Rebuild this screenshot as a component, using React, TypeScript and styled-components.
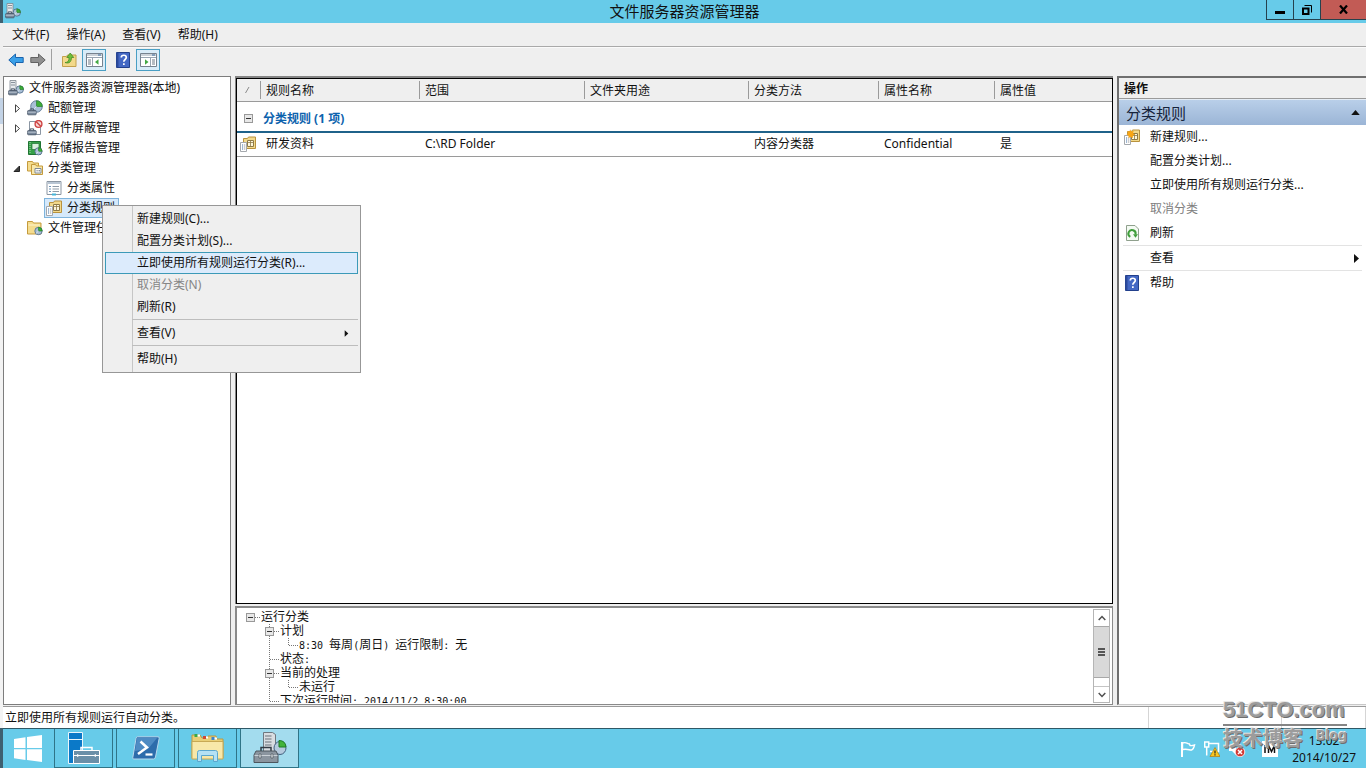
import React from "react";
import styled, { createGlobalStyle, css } from "styled-components";

const GlobalStyle = createGlobalStyle`
  *, *::before, *::after { box-sizing: border-box; }
  body {
    margin: 0;
    background: #efefef;
    color: #111;
    font-family: "Noto Sans", "Noto Sans CJK SC", sans-serif;
    font-size: 12px;
    line-height: 20px;
  }
  button {
    font: inherit;
    color: inherit;
    border: 0;
    padding: 0;
    background: none;
    text-align: left;
    white-space: nowrap;
  }
  ul { list-style: none; margin: 0; padding: 0; }
  h1, h2, h3 { margin: 0; font-weight: 400; }
  svg { display: block; flex: none; }
`;

/* ---------- frame ---------- */

const Desktop = styled.div`
  position: relative;
  min-height: 100vh;
  display: grid;
  grid-template-columns: minmax(0, 1fr);
  grid-template-rows: auto auto auto 1fr auto auto;
  padding-left: 3px;
  background: linear-gradient(
    #3e6070 0 23px,
    #efefef 23px 98px,
    #c3d3e6 98px 124px,
    #f3f3f3 124px calc(100% - 40px),
    #3e6070 calc(100% - 40px)
  );
`;

const TitleBar = styled.header`
  display: grid;
  grid-template-columns: 1fr auto 1fr;
  height: 23px;
  background: #67cbe9;
`;

const TitleIcon = styled.div`
  padding: 3px 2px;
`;

const Title = styled.h1`
  font-size: 15px;
  line-height: 23px;
`;

const Caption = styled.div`
  display: flex;
  justify-content: flex-end;
  align-items: flex-start;
`;

const CaptionButton = styled.button<{ $wide?: boolean }>`
  display: flex;
  align-items: center;
  justify-content: center;
  width: ${(p) => (p.$wide ? 46 : 27)}px;
  height: 20px;
  border: 1px solid #25424e;
  border-top: 0;
  border-right: 0;
  background: ${(p) => (p.$wide ? "#c25b55" : "#67cbe9")};
`;

const MenuBar = styled.nav`
  display: flex;
  height: 24px;
  padding-left: 1px;
  background: #efefef;
  border-bottom: 1px solid #a9a9a9;
`;

const MenuBarButton = styled.button`
  padding: 0 9px 0 8px;
  line-height: 23px;
`;

const ToolBar = styled.div`
  display: flex;
  align-items: flex-start;
  gap: 8px;
  height: 29px;
  padding: 1px 4px;
  background: #efefef;
  border-top: 1px solid #fafafa;
`;

const ToolGroup = styled.div`
  display: flex;
  gap: 4px;
`;

const ToolButton = styled.button<{ $on?: boolean }>`
  display: flex;
  align-items: center;
  justify-content: center;
  width: ${(p) => (p.$on ? 24 : 18)}px;
  height: 22px;
  ${(p) =>
    p.$on &&
    css`
      background: #d9ecf8;
      border: 1px solid #4a9fc4;
    `}
`;

const ToolDivider = styled.span`
  width: 1px;
  height: 21px;
  background: #a0a0a0;
`;

const Main = styled.main`
  display: grid;
  grid-template-columns: 228px minmax(0, 1fr) 249px;
  column-gap: 4px;
  min-height: 0;
  padding-bottom: 1px;
  background: #efefef;
`;

/* ---------- console tree ---------- */

const TreePane = styled.aside`
  padding-top: 1px;
  background: #fff;
  border: 1px solid #7d7d7d;
`;

const TreeRow = styled.div<{ $depth: number }>`
  position: relative;
  display: flex;
  align-items: center;
  height: 20px;
  padding-left: ${(p) => [3, 9, 41][p.$depth]}px;
`;

const Expander = styled.button`
  width: 13px;
  height: 20px;
  display: flex;
  align-items: center;
`;

const TreeLabel = styled.button<{ $selected?: boolean }>`
  display: flex;
  align-items: center;
  gap: 5px;
  height: 20px;
  padding: 0 3px 0 1px;
  border: 1px solid transparent;
  margin-left: -1px;
  ${(p) =>
    p.$selected &&
    css`
      border-color: #7fb4dc;
      background: #d6e9fb;
    `}
`;

const ContextMenu = styled.div`
  position: absolute;
  z-index: 2;
  left: 98px;
  top: 7px;
  width: 259px;
  padding: 2px;
  background: linear-gradient(90deg, #efefef 29px, #c6c6c6 29px 30px, #efefef 30px);
  border: 1px solid #979797;
`;

const ContextItem = styled.button<{ $hot?: boolean }>`
  display: flex;
  align-items: center;
  justify-content: space-between;
  width: 100%;
  height: 22px;
  padding: 0 8px 0 31px;
  border: 1px solid ${(p) => (p.$hot ? "#3c9ab8" : "transparent")};
  background: ${(p) => (p.$hot ? "#dcebfc" : "transparent")};
  &:disabled { color: #868686; }
`;

const ContextDivider = styled.hr`
  margin: 1px 0 2px 27px;
  border: 0;
  border-top: 1px solid #bdbdbd;
`;

/* ---------- result list ---------- */

const Center = styled.section`
  display: grid;
  grid-template-rows: 1fr 99px;
  row-gap: 2px;
  min-width: 0;
`;

const ListPane = styled.div`
  display: grid;
  border: solid #858585;
  border-width: 2px 0 0 1px;
`;

const ListBody = styled.div`
  background: #fff;
  border: 1px solid #000;
`;

const RuleTable = styled.table`
  width: 100%;
  table-layout: fixed;
  border-collapse: collapse;
`;

const HeadCell = styled.th`
  height: 22px;
  padding: 1px 0 0;
  font-weight: 400;
  text-align: left;
  background: #efefef;
  border-bottom: 1px solid #9a9a9a;
`;

const HeadText = styled.span<{ $first?: boolean }>`
  display: block;
  height: 18px;
  line-height: 20px;
  padding-left: ${(p) => (p.$first ? 6 : 5)}px;
  border-left: ${(p) => (p.$first ? "0" : "1px solid #9a9a9a")};
`;

const GroupCell = styled.td`
  height: 31px;
  padding: 5px 0 0 7px;
  border-bottom: 2px solid #1f628a;
`;

const GroupLabel = styled.div`
  display: flex;
  align-items: center;
  gap: 10px;
  color: #0c62ad;
  font-weight: 700;
`;

const Cell = styled.td`
  height: 24px;
  padding: 0 0 0 6px;
  border-bottom: 1px solid #9a9a9a;
  &:first-child { padding-left: 3px; }
`;

const Box = styled.button`
  width: 9px;
  height: 9px;
  border: 1px solid #999;
  background: linear-gradient(#333, #333) center / 5px 1px no-repeat #e8e8e8;
`;

/* ---------- status tree under the list ---------- */

const StatusPane = styled.div`
  display: flex;
  min-height: 0;
  overflow: hidden;
  padding: 1px 2px 1px 4px;
  background: #fff;
  border: 2px solid #8a8a8a;
  border-right-width: 1px;
  border-bottom-width: 1px;
`;

const StatusTree = styled.ul`
  flex: 1;
  padding-top: 1px;
  overflow: hidden;
`;

const StatusRow = styled.li`
  display: flex;
  height: 14px;
  line-height: 14px;
  white-space: pre;
`;

const dotsV = "repeating-linear-gradient(#777 0 1px, transparent 1px 2px)";
const dotsH = "repeating-linear-gradient(90deg, #777 0 1px, transparent 1px 2px)";

const guides = {
  none: "none",
  root: `${dotsH} 10px 7px / 9px 1px no-repeat`,
  through: `${dotsV} 9px 0 / 1px 100% no-repeat`,
  branch: `${dotsV} 9px 0 / 1px 100% no-repeat, ${dotsH} 10px 7px / 9px 1px no-repeat`,
  elbow: `${dotsV} 9px 0 / 1px 8px no-repeat, ${dotsH} 10px 7px / 9px 1px no-repeat`,
};

type Guide = keyof typeof guides;

const GuideCell = styled.span<{ $kind: Guide }>`
  display: flex;
  align-items: center;
  justify-content: center;
  width: 19px;
  background: ${(p) => guides[p.$kind]};
`;

const StatusText = styled.span`
  padding-left: 1px;
`;

const Fixed = styled.span`
  font-family: "DejaVu Sans Mono", monospace;
  font-size: 10px;
`;

const ScrollBar = styled.div`
  display: flex;
  flex-direction: column;
  width: 17px;
  border: 1px solid #b5b5b5;
`;

const ScrollArrow = styled.button<{ $down?: boolean }>`
  display: flex;
  align-items: center;
  justify-content: center;
  height: 16px;
  border-top: ${(p) => (p.$down ? "1px solid #c4c4c4" : "0")};
`;

const ScrollThumb = styled.button`
  display: flex;
  align-items: center;
  justify-content: center;
  flex: 1;
  margin-bottom: 8px;
  background: #d9d9d9;
  border: solid #a8a8a8;
  border-width: 1px 0;
`;

/* ---------- action pane ---------- */

const ActionPane = styled.aside`
  background: #fff;
  border: 2px solid #6f6f6f;
  border-right: 0;
  border-bottom: 1px solid #c8c8c8;
`;

const ActionTitle = styled.h2`
  height: 21px;
  padding-left: 5px;
  font-size: 12px;
  font-weight: 700;
  line-height: 21px;
  background: #efefef;
  border-bottom: 1px solid #9a9a9a;
`;

const ActionGroup = styled.h3`
  display: flex;
  align-items: center;
  justify-content: space-between;
  height: 26px;
  padding: 0 6px 0 7px;
  font-size: 15px;
  color: #16233a;
  background: linear-gradient(#b9cfe9, #9bb5d6);
  border-top: 1px solid #e4ecf5;
`;

const ActionItem = styled.button`
  display: flex;
  align-items: center;
  width: 100%;
  height: 24px;
  padding: 0 6px 0 5px;
  &:disabled { color: #808080; }
`;

const ActionIcon = styled.span`
  display: flex;
  justify-content: center;
  width: 16px;
  margin-right: 10px;
`;

const ActionText = styled.span`
  flex: 1;
`;

const ActionDivider = styled.hr`
  margin: 0 4px;
  border: 0;
  border-top: 1px solid #e3e3e3;
`;

/* ---------- status bar and task bar ---------- */

const StatusBar = styled.footer`
  display: flex;
  height: 22px;
  padding-left: 2px;
  line-height: 21px;
  background: #fff;
  border-top: 1px solid #9a9a9a;
`;

const StatusMessage = styled.span`
  flex: 1;
  border-right: 1px solid #d5d5d5;
`;

const StatusSlot = styled.span<{ $w: number }>`
  width: ${(p) => p.$w}px;
  border-right: 1px solid #d5d5d5;
`;

const TaskBar = styled.footer`
  display: flex;
  gap: 3px;
  height: 40px;
  background: #67cbe9;
  border-top: 1px solid #2f5866;
`;

const TaskButton = styled.button<{ $start?: boolean; $active?: boolean }>`
  display: flex;
  align-items: center;
  justify-content: center;
  width: ${(p) => (p.$start ? 50 : 59)}px;
  margin-right: ${(p) => (p.$start ? -2 : 0)}px;
  border: ${(p) => (p.$start ? "0" : "1px solid #2f7487")};
  border-top-width: 0;
  background: ${(p) => (p.$active ? "#a3dcee" : "transparent")};
`;

const Tray = styled.div`
  display: flex;
  align-items: center;
  gap: 8px;
  margin-left: auto;
  padding-right: 10px;
`;

const InputMethod = styled.span`
  margin-left: 8px;
`;

const Clock = styled.time`
  margin-left: 6px;
  text-align: center;
  line-height: 17px;
`;

const Watermark = styled.div`
  position: absolute;
  z-index: 3;
  right: 19px;
  bottom: 16px;
  width: 124px;
  color: #9c9c9c;
  font-weight: 700;
  text-shadow: -1px -1px 0 #e6e6e6, 1px 1px 0 #6e6e6e;
  pointer-events: none;
`;

const WatermarkSite = styled.div`
  font-family: "Liberation Sans", sans-serif;
  font-size: 22px;
  line-height: 28px;
  border-bottom: 2px solid #858585;
`;

const WatermarkBlog = styled.div`
  display: flex;
  justify-content: space-between;
  font-size: 20px;
  line-height: 26px;
`;

const WatermarkSmall = styled.span`
  font-size: 14px;
  line-height: 18px;
`;

/* ---------- icons ---------- */

const Pie = ({ x, y, r }: { x: number; y: number; r: number }) => (
  <g>
    <circle cx={x} cy={y} r={r} fill="#a9bfd6" stroke="#4b6785" strokeWidth="0.8" />
    <path d={`M${x} ${y}V${y - r}A${r} ${r} 0 0 1 ${x + r} ${y}Z`} fill="#3fae38" stroke="#1f7a24" strokeWidth="0.6" />
    <path d={`M${x} ${y}L${x - r * 0.7} ${y + r * 0.7}`} stroke="#e8f0f8" strokeWidth="0.8" />
  </g>
);

const Toolbox = ({ x, y, w }: { x: number; y: number; w: number }) => (
  <g>
    <path d={`M${x + w * 0.3} ${y}v-1.6h${w * 0.4}v1.6`} fill="none" stroke="#445264" />
    <rect x={x} y={y} width={w} height={w * 0.5} rx="0.8" fill="#78889b" stroke="#465466" strokeWidth="0.8" />
    <path d={`M${x} ${y + w * 0.2}h${w}`} stroke="#c8d1db" strokeWidth="0.8" />
  </g>
);

const ServerIcon = () => (
  <svg width="16" height="16" viewBox="0 0 16 16">
    <path d="M2 .5h6v10H2z" fill="#e6e9ec" stroke="#7d868f" strokeWidth="0.8" />
    <path d="M3 2.5h4M3 5h4" stroke="#87919b" />
    <Pie x={11.8} y={9.5} r={3.7} />
    <Toolbox x={0.6} y={10.5} w={8.6} />
  </svg>
);

const QuotaIcon = () => (
  <svg width="16" height="16" viewBox="0 0 16 16">
    <Pie x={9.5} y={6.5} r={5.8} />
    <Toolbox x={0.6} y={10.5} w={8.6} />
  </svg>
);

const ScreenIcon = () => (
  <svg width="16" height="16" viewBox="0 0 16 16">
    <path d="M2.5 1.5h11v13h-11z" fill="#fff" stroke="#8b96a3" />
    <circle cx="11.5" cy="4" r="3.4" fill="#f7d9d7" stroke="#cf4444" strokeWidth="1.4" />
    <path d="M9.2 1.8l4.6 4.4" stroke="#cf4444" strokeWidth="1.4" />
    <Toolbox x={0.6} y={10.5} w={8.6} />
  </svg>
);

const ReportIcon = () => (
  <svg width="16" height="16" viewBox="0 0 16 16">
    <path d="M1.5 1.5h12v13h-12z" fill="#35a048" stroke="#1f7332" />
    <path d="M5 3.5h7v6H5z" fill="#d9f0dc" stroke="#1f7332" strokeWidth="0.7" />
    <path d="M3 2v12" stroke="#a7dcb0" strokeDasharray="1 1" />
    <Pie x={11.5} y={11.3} r={3.6} />
  </svg>
);

const FoldersIcon = () => (
  <svg width="16" height="16" viewBox="0 0 16 16">
    <path d="M.5 1.5h5l1 1.5h5v8H.5z" fill="#f4dc8e" stroke="#c49a3c" />
    <path d="M4.500 4.500h4l1 1.500h6v8.500h-11z" fill="#f8e7aa" stroke="#c49a3c" />
    <path d="M8 8.500h6v4.500H8z" fill="#fff" stroke="#7d8895" />
    <path d="M9.500 10.800h1.200M11.500 10.800h1.500" stroke="#55606d" />
  </svg>
);

const PropertiesIcon = () => (
  <svg width="16" height="16" viewBox="0 0 16 16">
    <path d="M1 1.500h14v13H1z" fill="#fff" stroke="#8b96a3" />
    <path d="M1.500 3h13" stroke="#b9c6d4" strokeWidth="2" />
    <path d="M3 6.500h2M3 9h2M3 11.500h2" stroke="#6f93b8" />
    <path d="M6.500 6.500h6.500M6.500 9h6.500M6.500 11.500h6.500" stroke="#8e9aa7" />
    <path d="M6 14.500h4" stroke="#45b5d9" strokeWidth="2" />
  </svg>
);

const RuleIcon = ({ fresh = false }: { fresh?: boolean }) => (
  <svg width="16" height="16" viewBox="0 0 16 16">
    <path d="M3.500 2.500h4l1-1.500h7v11.500h-12z" fill="#f2d98c" stroke="#b9923d" />
    <path d="M7.500 4.500h6v6h-6z" fill="#fdf6dc" stroke="#8e7a46" />
    <path d="M7.500 6.500h6M10.500 4.500v6" stroke="#8e7a46" strokeWidth="0.8" />
    <path d="M.5 6.500h6v9h-6z" fill="#fff" stroke="#a4a8ad" />
    <path d="M2 9h1M2 11h1M2 13h1" stroke="#3c6ea5" />
    <path d="M3.800 9h1.500M3.800 11h1.500M3.800 13h1.500" stroke="#999" />
    {fresh && (
      <path d="M6 .3l1.300 2.200 2.400-.7-.7 2.400L11 5.500 8.800 6.700 9 9 6.600 8 4.600 9l-.1-2.300L2.600 5.500l1.600-1.300L3.600 2l2 .7z" fill="#f8a514" />
    )}
  </svg>
);

const TaskFolderIcon = () => (
  <svg width="16" height="16" viewBox="0 0 16 16">
    <path d="M.5 1.500h5l1 1.500h7.500v11H.5z" fill="#f4dc8e" stroke="#c49a3c" />
    <path d="M1.500 5h11.500" stroke="#fdf3cc" />
    <Pie x={11.5} y={11} r={3.7} />
  </svg>
);

const ArrowIcon = ({ back = false }: { back?: boolean }) => (
  <svg width="16" height="16" viewBox="0 0 16 16">
    {back ? (
      <path d="M.8 8l6.700-6v3.500h7.700v5H7.500V14z" fill="#3aa0e8" stroke="#1a63ad" />
    ) : (
      <path d="M15.200 8L8.500 2v3.500H.8v5h7.700V14z" fill="#909090" stroke="#626262" />
    )}
  </svg>
);

const UpFolderIcon = () => (
  <svg width="15" height="16" viewBox="0 0 15 16">
    <path d="M.5 4.500h4l1-1.500h8.500v11.500H.5z" fill="#f3d98a" stroke="#c3a04c" />
    <path d="M3 10.500c3 0 4-1.500 4-5H4.800L8.200 1l3.600 4.500H9.500c0 4.500-2.500 6.500-6.500 5z" fill="#6fbf3a" stroke="#3b8520" strokeWidth="0.700" />
  </svg>
);

const PaneIcon = ({ right = false }: { right?: boolean }) => (
  <svg width="17" height="14" viewBox="0 0 17 14">
    <path d="M.5.5h16v13H.5z" fill="#fff" stroke="#77828e" />
    <path d="M1 2h15M1 4.500h15" stroke="#98a4b1" />
    <path d="M12 2h3" stroke="#3d6d9e" />
    {right ? (
      <g>
        <path d="M10.500 5v8" stroke="#98a4b1" />
        <path d="M12 7h3M12 9h3M12 11h3" stroke="#6d7884" />
        <path d="M5 6.200v5.600l3.500-2.800z" fill="#43a843" />
      </g>
    ) : (
      <g>
        <path d="M6.500 5v8" stroke="#98a4b1" />
        <path d="M2 7h3M2 9h3M2 11h3" stroke="#6d7884" />
        <path d="M12.500 6.200v5.600L9 9z" fill="#43a843" />
      </g>
    )}
  </svg>
);

const HelpIcon = () => (
  <svg width="14" height="16" viewBox="0 0 14 16">
    <path d="M.5.5h13v15H.5z" fill="#4468c4" stroke="#23408c" />
    <path d="M1.500 1v14" stroke="#2c4a9c" strokeWidth="2" />
    <path d="M5.300 5.500c0-3 5-3 5 0 0 2-2.500 2-2.500 4.300" fill="none" stroke="#fff" strokeWidth="1.700" />
    <path d="M7 11.300h1.700V13H7z" fill="#fff" />
  </svg>
);

const RefreshIcon = () => (
  <svg width="13" height="16" viewBox="0 0 13 16">
    <path d="M.5.5H9L12.500 4v11.500H.5z" fill="#f4faf3" stroke="#8fa08d" />
    <path d="M4.300 11.800A3.600 3.600 0 1 1 9.500 9.500" fill="none" stroke="#3f9e3b" strokeWidth="2" />
    <path d="M7 9.200h5L9.500 12.800z" fill="#3f9e3b" />
  </svg>
);

const Triangle = ({ dir, size = 7 }: { dir: "up" | "right"; size?: number }) => (
  <svg width={size} height={size + 2} viewBox="0 0 7 9">
    <path d={dir === "up" ? "M0 6.500L3.500 2.500 7 6.500z" : "M1 0l5 4.500L1 9z"} fill="#111" />
  </svg>
);

const TreeArrow = ({ open = false }: { open?: boolean }) => (
  <svg width="8" height="9" viewBox="0 0 8 9">
    {open ? (
      <path d="M6.500 2v5.500H1z" fill="#404040" stroke="#222" />
    ) : (
      <path d="M2.500.8v7.400L6.500 4.500z" fill="#fff" stroke="#444" />
    )}
  </svg>
);

const SortMark = () => (
  <svg width="8" height="18" viewBox="0 0 8 18">
    <path d="M2.500 12L6 6" stroke="#8a8a8a" />
  </svg>
);

const Chevron = ({ up = false }: { up?: boolean }) => (
  <svg width="8" height="6" viewBox="0 0 8 6">
    <path d={up ? "M.7 5L4 1.500 7.300 5" : "M.7 1L4 4.500 7.300 1"} fill="none" stroke="#505050" strokeWidth="1.500" />
  </svg>
);

const Grip = () => (
  <svg width="7" height="8" viewBox="0 0 7 8">
    <path d="M0 1h7M0 4h7M0 7h7" stroke="#555" strokeWidth="2" />
  </svg>
);

const WindowsLogo = () => (
  <svg width="28" height="27" viewBox="0 0 28 27">
    <path d="M0 4l11.500-1.700V13H0zM13 2L28 0v13H13zM0 14.300h11.500V25L0 23.300zM13 14.300h15V27l-15-1.900z" fill="#fff" />
  </svg>
);

const ServerManagerIcon = () => (
  <svg width="34" height="32" viewBox="0 0 34 32">
    <path d="M1.500.5h14v31h-14z" fill="#0b79c8" stroke="#e9f5fb" />
    <path d="M1.500 7.500h14" stroke="#e9f5fb" />
    <path d="M14 18v-2.500h11V18" fill="none" stroke="#fff" strokeWidth="1.500" />
    <path d="M6.500 18.500h26v13h-26z" fill="#6a8fa8" stroke="#fff" />
    <path d="M7 23.500h25" stroke="#fff" />
    <path d="M10 22l3 1.500-3 1.500zM29 22l-3 1.500 3 1.500z" fill="#fff" />
  </svg>
);

const PowerShellIcon = () => (
  <svg width="28" height="24" viewBox="0 0 28 24">
    <path d="M5.500.8h20.500q1.500 0 1.200 1.500L23.500 21q-.4 2-2 2H1.800Q.5 23 .8 21.500L4 2.500Q4.400.8 5.500.8z" fill="#2d6cab" stroke="#b9d7ec" />
    <path d="M5 2h20L16 13 3 15z" fill="#5c98cd" opacity="0.700" />
    <path d="M8.500 5.500l6.500 6-9 6.500" fill="none" stroke="#fff" strokeWidth="2.500" />
    <path d="M13.500 18.500h7" stroke="#fff" strokeWidth="2.200" />
  </svg>
);

const ExplorerIcon = () => (
  <svg width="33" height="30" viewBox="0 0 33 30">
    <path d="M1 6V2h8l2 3h5l1-2h8l1 3h6v19H1z" fill="#e9cf76" stroke="#b99a43" />
    <path d="M5 2.500h4M14 4.500h3M22 5.500h4" stroke="#fff" strokeWidth="2" />
    <path d="M3.500 2.500h3" stroke="#39a849" strokeWidth="3" />
    <path d="M12 4.500h3" stroke="#d04a32" strokeWidth="3" />
    <path d="M20.500 5.500h3" stroke="#3a83cc" strokeWidth="3" />
    <path d="M1 8.500h31V26H1z" fill="#f8e8a9" stroke="#c8a954" />
    <path d="M6.500 28.500v-9q0-2 2-2h16q2 0 2 2v9h-4v-6h-12v6z" fill="#b4e1f4" stroke="#5ba7cd" />
  </svg>
);

const FsrmIcon = () => (
  <svg width="34" height="32" viewBox="0 0 34 32">
    <path d="M10.500.5h9l3 2v17h-12z" fill="#d9dde1" stroke="#6e777f" />
    <path d="M12 4h6.500M12 7h6.500M12 10h6.500M12 13h6.500" stroke="#6a727a" strokeWidth="1.200" />
    <ellipse cx="27" cy="16" rx="6" ry="6.500" fill="#b5cadd" stroke="#41607e" />
    <path d="M26 15V8.500q6.500 0 7 6.500z" fill="#42b33a" stroke="#1d7c26" />
    <path d="M8 19v-3.500h10V19" fill="none" stroke="#343c45" strokeWidth="1.500" />
    <path d="M3 19h20l2 4v7.500H1V23z" fill="#8b959f" stroke="#4d565e" />
    <path d="M1.500 23.500h23" stroke="#c9d0d6" />
    <path d="M6 22h2v4H6zM18 22h2v4h-2z" fill="#e3e7ea" stroke="#3d464e" strokeWidth="0.600" />
  </svg>
);

const FlagIcon = () => (
  <svg width="16" height="16" viewBox="0 0 16 16">
    <path d="M2 1v15" stroke="#fff" strokeWidth="2" />
    <path d="M2.500 2c4-1.500 5 1 7 1l.5 1.500c2 .5 3 0 4.500-.5-.5 2.500-1.500 4.500-3 5-2 .5-3-1.500-9-.5z" fill="#67cbe9" stroke="#fff" strokeWidth="1.400" />
  </svg>
);

const NetworkIcon = () => (
  <svg width="16" height="16" viewBox="0 0 16 16">
    <path d="M.7 1h4v5h-4zM2.700 6v8.500M5 2.500h9.500v8H6" fill="none" stroke="#fff" strokeWidth="1.500" />
    <path d="M11 6.500l5 9H6z" fill="#f9c61f" stroke="#b37b0a" strokeWidth="0.700" />
    <path d="M11 9.500v3M11 13.300v1.200" stroke="#222" strokeWidth="1.200" />
  </svg>
);

const VolumeIcon = () => (
  <svg width="18" height="16" viewBox="0 0 18 16">
    <path d="M1 5h3l4-4v13l-4-4H1z" fill="#fff" />
    <circle cx="12" cy="11" r="4.800" fill="#d23a35" stroke="#fff" strokeWidth="0.800" />
    <path d="M10 9l4 4M14 9l-4 4" stroke="#fff" strokeWidth="1.500" />
  </svg>
);

const ImeIcon = () => (
  <svg width="16" height="16" viewBox="0 0 16 16">
    <path d="M0 0h16v16H0z" fill="#fff" />
    <path d="M3 4v8M6.500 12V4.500l3 6 3-6V12" fill="none" stroke="#111" strokeWidth="1.500" />
  </svg>
);

/* ---------- data ---------- */

const menus = ["文件(F)", "操作(A)", "查看(V)", "帮助(H)"];

const contextMenu = (
  <ContextMenu role="menu">
    <ContextItem role="menuitem">新建规则(C)...</ContextItem>
    <ContextItem role="menuitem">配置分类计划(S)...</ContextItem>
    <ContextItem role="menuitem" $hot>立即使用所有规则运行分类(R)...</ContextItem>
    <ContextItem role="menuitem" disabled>取消分类(N)</ContextItem>
    <ContextItem role="menuitem">刷新(R)</ContextItem>
    <ContextDivider />
    <ContextItem role="menuitem">
      查看(V)
      <Triangle dir="right" size={5} />
    </ContextItem>
    <ContextDivider />
    <ContextItem role="menuitem">帮助(H)</ContextItem>
  </ContextMenu>
);

interface TreeNode {
  label: string;
  icon: React.ReactNode;
  depth: number;
  arrow?: "open" | "closed";
  selected?: boolean;
}

const tree: TreeNode[] = [
  { label: "文件服务器资源管理器(本地)", icon: <ServerIcon />, depth: 0 },
  { label: "配额管理", icon: <QuotaIcon />, depth: 1, arrow: "closed" },
  { label: "文件屏蔽管理", icon: <ScreenIcon />, depth: 1, arrow: "closed" },
  { label: "存储报告管理", icon: <ReportIcon />, depth: 1 },
  { label: "分类管理", icon: <FoldersIcon />, depth: 1, arrow: "open" },
  { label: "分类属性", icon: <PropertiesIcon />, depth: 2 },
  { label: "分类规则", icon: <RuleIcon />, depth: 2, selected: true },
  { label: "文件管理任务", icon: <TaskFolderIcon />, depth: 1 },
];

const columns = ["规则名称", "范围", "文件夹用途", "分类方法", "属性名称", "属性值"];
const columnWidths = [23, 159, 165, 164, 130, 116];
const rule = ["研发资料", "C:\\RD Folder", "", "内容分类器", "Confidential", "是"];

const statusRows: { guides: Guide[]; box?: boolean; text: React.ReactNode }[] = [
  { guides: ["root"], box: true, text: "运行分类" },
  { guides: ["none", "branch"], box: true, text: "计划" },
  {
    guides: ["none", "through", "elbow"],
    text: (
      <>
        <Fixed>8:30 </Fixed>每周<Fixed>(</Fixed>周日<Fixed>) </Fixed>运行限制<Fixed>: </Fixed>无
      </>
    ),
  },
  { guides: ["none", "branch"], text: <>状态<Fixed>:</Fixed></> },
  { guides: ["none", "branch"], box: true, text: "当前的处理" },
  { guides: ["none", "through", "elbow"], text: "未运行" },
  { guides: ["none", "elbow"], text: <>下次运行时间<Fixed>: 2014/11/2 8:30:00</Fixed></> },
];

/* ---------- page ---------- */

export default function App() {
  return (
    <>
      <GlobalStyle />
      <Desktop>
        <TitleBar>
          <TitleIcon><ServerIcon /></TitleIcon>
          <Title>文件服务器资源管理器</Title>
          <Caption>
            <CaptionButton aria-label="最小化">
              <svg width="10" height="10" viewBox="0 0 10 10"><path d="M0 7.500h10" stroke="#000" strokeWidth="3" /></svg>
            </CaptionButton>
            <CaptionButton aria-label="还原">
              <svg width="10" height="10" viewBox="0 0 10 10">
                <path d="M1 3.500h5.500V9H1z" fill="none" stroke="#000" strokeWidth="2" />
                <path d="M2.500.5h7v7" fill="none" stroke="#000" />
              </svg>
            </CaptionButton>
            <CaptionButton $wide aria-label="关闭">
              <svg width="9" height="9" viewBox="0 0 9 9"><path d="M1 .5l7 8M8 .5l-7 8" stroke="#000" strokeWidth="2.200" /></svg>
            </CaptionButton>
          </Caption>
        </TitleBar>

        <MenuBar>
          {menus.map((m) => <MenuBarButton key={m}>{m}</MenuBarButton>)}
        </MenuBar>

        <ToolBar>
          <ToolGroup>
            <ToolButton aria-label="后退"><ArrowIcon back /></ToolButton>
            <ToolButton aria-label="前进"><ArrowIcon /></ToolButton>
            <ToolDivider />
          </ToolGroup>
          <ToolGroup>
            <ToolButton aria-label="上一级"><UpFolderIcon /></ToolButton>
            <ToolButton $on aria-label="显示控制台树"><PaneIcon /></ToolButton>
          </ToolGroup>
          <ToolGroup>
            <ToolButton aria-label="帮助"><HelpIcon /></ToolButton>
            <ToolButton $on aria-label="显示操作窗格"><PaneIcon right /></ToolButton>
          </ToolGroup>
        </ToolBar>

        <Main>
          <TreePane>
            {tree.map((n) => (
              <TreeRow key={n.label} $depth={n.depth}>
                {n.depth === 1 &&
                  (n.arrow ? (
                    <Expander aria-label={n.label}><TreeArrow open={n.arrow === "open"} /></Expander>
                  ) : (
                    <Expander as="span" />
                  ))}
                <TreeLabel $selected={n.selected}>
                  {n.icon}
                  {n.label}
                </TreeLabel>
                {n.selected && contextMenu}
              </TreeRow>
            ))}
          </TreePane>

          <Center>
            <ListPane>
              <ListBody>
                <RuleTable>
                  <colgroup>
                    {columnWidths.map((w, i) => <col key={i} width={w} />)}
                    <col />
                  </colgroup>
                  <thead>
                    <tr>
                      <HeadCell scope="col" aria-label="排序"><HeadText $first><SortMark /></HeadText></HeadCell>
                      {columns.map((c) => (
                        <HeadCell key={c} scope="col"><HeadText>{c}</HeadText></HeadCell>
                      ))}
                    </tr>
                  </thead>
                  <tbody>
                    <tr>
                      <GroupCell colSpan={7}>
                        <GroupLabel><Box aria-label="折叠" />分类规则 (1 项)</GroupLabel>
                      </GroupCell>
                    </tr>
                    <tr>
                      <Cell><RuleIcon /></Cell>
                      {rule.map((v, i) => <Cell key={i}>{v}</Cell>)}
                    </tr>
                  </tbody>
                </RuleTable>
              </ListBody>
            </ListPane>

            <StatusPane>
              <StatusTree>
                {statusRows.map((r, i) => (
                  <StatusRow key={i}>
                    {r.guides.map((g, j) => (
                      <GuideCell key={j} $kind={g}>
                        {r.box && j === r.guides.length - 1 && <Box aria-label="折叠" />}
                      </GuideCell>
                    ))}
                    <StatusText>{r.text}</StatusText>
                  </StatusRow>
                ))}
              </StatusTree>
              <ScrollBar>
                <ScrollArrow aria-label="向上"><Chevron up /></ScrollArrow>
                <ScrollThumb aria-label="滚动"><Grip /></ScrollThumb>
                <ScrollArrow $down aria-label="向下"><Chevron /></ScrollArrow>
              </ScrollBar>
            </StatusPane>
          </Center>

          <ActionPane>
            <ActionTitle>操作</ActionTitle>
            <ActionGroup>分类规则<Triangle dir="up" size={9} /></ActionGroup>
            <ActionItem><ActionIcon><RuleIcon fresh /></ActionIcon><ActionText>新建规则...</ActionText></ActionItem>
            <ActionItem><ActionIcon /><ActionText>配置分类计划...</ActionText></ActionItem>
            <ActionItem><ActionIcon /><ActionText>立即使用所有规则运行分类...</ActionText></ActionItem>
            <ActionItem disabled><ActionIcon /><ActionText>取消分类</ActionText></ActionItem>
            <ActionItem><ActionIcon><RefreshIcon /></ActionIcon><ActionText>刷新</ActionText></ActionItem>
            <ActionDivider />
            <ActionItem><ActionIcon /><ActionText>查看</ActionText><Triangle dir="right" /></ActionItem>
            <ActionDivider />
            <ActionItem><ActionIcon><HelpIcon /></ActionIcon><ActionText>帮助</ActionText></ActionItem>
          </ActionPane>
        </Main>

        <StatusBar>
          <StatusMessage>立即使用所有规则运行自动分类。</StatusMessage>
          <StatusSlot $w={133} />
          <StatusSlot $w={84} />
        </StatusBar>

        <TaskBar>
          <TaskButton $start aria-label="开始"><WindowsLogo /></TaskButton>
          <TaskButton aria-label="服务器管理器"><ServerManagerIcon /></TaskButton>
          <TaskButton aria-label="PowerShell"><PowerShellIcon /></TaskButton>
          <TaskButton aria-label="文件资源管理器"><ExplorerIcon /></TaskButton>
          <TaskButton $active aria-label="文件服务器资源管理器"><FsrmIcon /></TaskButton>
          <Tray>
            <FlagIcon />
            <NetworkIcon />
            <VolumeIcon />
            <InputMethod><ImeIcon /></InputMethod>
            <Clock>13:02<br />2014/10/27</Clock>
          </Tray>
        </TaskBar>

        <Watermark>
          <WatermarkSite>51CTO.com</WatermarkSite>
          <WatermarkBlog>技术博客<WatermarkSmall>Blog</WatermarkSmall></WatermarkBlog>
        </Watermark>
      </Desktop>
    </>
  );
}
